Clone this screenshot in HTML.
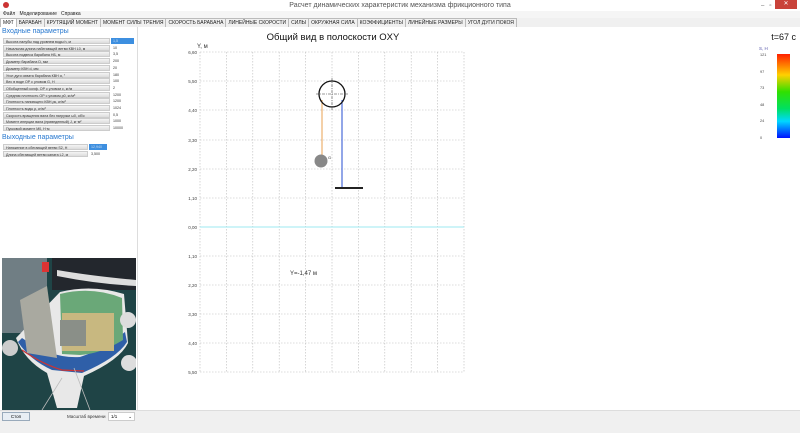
<!DOCTYPE html><html><head><meta charset="utf-8"><style>
*{margin:0;padding:0;box-sizing:border-box}
body{width:800px;height:433px;background:#f0f0f0;font-family:"Liberation Sans",sans-serif;position:relative;overflow:hidden}
.a{position:absolute;white-space:nowrap}
.title{top:0;left:0;width:800px;height:11px;background:#fff;font-size:7px;color:#555;text-align:center;line-height:11px}
.menu{top:11px;left:0;width:800px;height:7px;background:#f5f5f5;font-size:5px;line-height:7px;padding-left:3px;color:#222}
.tabs{top:18px;left:0;height:10px;font-size:5px}
.tabs span{display:inline-block;height:9px;line-height:9px;padding:0 2px;border:1px solid #bbb;border-bottom:none;background:#f0f0f0;margin-right:-1px;color:#222}
.tabs span.s{background:#fff;height:10px}
.main{top:27px;left:137px;width:663px;height:383px;background:#fff;border-left:1px solid #ddd}
.lp{top:27px;left:0;width:137px;height:383px;background:#fff}
.h{font-size:7px;color:#2a7ad0}
.row{position:absolute;left:3px;width:131px;height:6px;font-size:3.6px;line-height:6px}
.row .l{position:absolute;left:0;width:107px;height:6px;background:linear-gradient(#f4f4f4,#dcdcdc);border:1px solid #ccc;padding-left:2px;color:#333}
.row .v{position:absolute;left:110px;color:#333}
</style></head><body>
<div class="a title">Расчет динамических характеристик механизма фрикционного типа</div>
<div class="a" style="top:2px;left:3px;width:6px;height:6px;border-radius:3px;background:#c33"></div>
<div class="a" style="top:3px;left:761px;font-size:6px;color:#666">–&nbsp;&nbsp;&nbsp;▫</div>
<div class="a" style="top:0;left:775px;width:22px;height:9px;background:#c9423a;color:#fff;font-size:6px;text-align:center;line-height:9px">✕</div>
<div class="a menu">Файл&nbsp;&nbsp;&nbsp;Моделирование&nbsp;&nbsp;&nbsp;Справка</div>
<div class="a tabs"><span class="s">МФТ</span><span>БАРАБАН</span><span>КРУТЯЩИЙ МОМЕНТ</span><span>МОМЕНТ СИЛЫ ТРЕНИЯ</span><span>СКОРОСТЬ БАРАБАНА</span><span>ЛИНЕЙНЫЕ СКОРОСТИ</span><span>СИЛЫ</span><span>ОКРУЖНАЯ СИЛА</span><span>КОЭФФИЦИЕНТЫ</span><span>ЛИНЕЙНЫЕ РАЗМЕРЫ</span><span>УГОЛ ДУГИ ПОКОЯ</span></div>
<div class="a lp">
<div class="a h" style="top:1px;left:2px">Входные параметры</div>
<div class="row" style="top:11px"><div class="l">Высота палубы над уровнем воды h, м</div><div class="v" style="left:108px;width:23px;background:#3d8fe0;color:#cde;padding-left:2px">1,5</div></div>
<div class="row" style="top:17.7px"><div class="l">Начальная длина набегающей ветви КВН L0, м</div><div class="v">10</div></div>
<div class="row" style="top:24.4px"><div class="l">Высота подвеса барабана НБ, м</div><div class="v">3,5</div></div>
<div class="row" style="top:31.1px"><div class="l">Диаметр барабана D, мм</div><div class="v">200</div></div>
<div class="row" style="top:37.8px"><div class="l">Диаметр КВН d, мм</div><div class="v">20</div></div>
<div class="row" style="top:44.5px"><div class="l">Угол дуги охвата барабана КВН α, °</div><div class="v">180</div></div>
<div class="row" style="top:51.2px"><div class="l">Вес в воде ОР с уловом G, Н</div><div class="v">100</div></div>
<div class="row" style="top:57.9px"><div class="l">Обобщенный коэф. ОР с уловом c, кг/м</div><div class="v">2</div></div>
<div class="row" style="top:64.6px"><div class="l">Средняя плотность ОР с уловом ρ0, кг/м³</div><div class="v">1200</div></div>
<div class="row" style="top:71.3px"><div class="l">Плотность наноющего КВН ρк, кг/м³</div><div class="v">1200</div></div>
<div class="row" style="top:78px"><div class="l">Плотность воды ρ, кг/м³</div><div class="v">1024</div></div>
<div class="row" style="top:84.7px"><div class="l">Скорость вращения вала без нагрузки ω0, об/с</div><div class="v">0,5</div></div>
<div class="row" style="top:91.4px"><div class="l">Момент инерции вала (приведенный) J, кг·м²</div><div class="v">1000</div></div>
<div class="row" style="top:98.1px"><div class="l">Пусковой момент М0, Н·м</div><div class="v">10000</div></div>
<div class="a h" style="top:107px;left:2px">Выходные параметры</div>
<div class="row" style="top:117px"><div class="l" style="width:85px">Натяжение в сбегающей ветви S2, Н</div><div class="v" style="left:86px;width:18px;background:#3d8fe0;color:#cde;padding-left:2px">12,940</div></div>
<div class="row" style="top:124px"><div class="l" style="width:85px">Длина сбегающей ветви каната L2, м</div><div class="v" style="left:88px">3,500</div></div>
<svg class="a" style="top:231px;left:2px" width="134" height="152" viewBox="0 0 134 152">
<rect width="134" height="152" fill="#1f4446"/>
<rect x="50" y="0" width="84" height="32" fill="#23272d"/>
<path d="M55 12 Q90 18 134 22 L134 28 Q95 26 55 18 Z" fill="#ddd"/>
<rect x="0" y="0" width="45" height="75" fill="#707e84"/>
<path d="M14 80 Q22 102 45 115 L55 150 L75 150 L82 118 Q118 102 126 85 L122 36 Q90 26 58 34 Z" fill="#e8e8e8"/>
<path d="M16 84 Q28 102 50 112 L80 115 Q115 100 125 84 L123 74 Q100 92 78 99 Q50 101 20 80 Z" fill="#2f5fa8"/>
<path d="M20 92 Q40 106 60 112 L82 113" stroke="#c33" stroke-width="1.2" fill="none"/>
<path d="M58 36 Q90 28 120 40 L121 82 Q98 96 78 97 L60 96 Z" fill="#6aa878"/>
<rect x="60" y="55" width="52" height="38" fill="#c8b880"/>
<rect x="58" y="62" width="26" height="26" fill="#8a8f88"/>
<path d="M18 42 L45 28 L55 100 L25 95 Z" fill="#a9a9a0"/>
<circle cx="126" cy="62" r="8" fill="#ddd"/><circle cx="127" cy="105" r="8" fill="#ddd"/><circle cx="8" cy="90" r="8" fill="#ccc"/>
<rect x="40" y="4" width="7" height="10" fill="#d33"/>
<line x1="60" y1="120" x2="40" y2="152" stroke="#bbb" stroke-width="0.8"/><line x1="72" y1="110" x2="88" y2="152" stroke="#bbb" stroke-width="0.8"/>
</svg>
</div>
<div class="a main">
<svg width="663" height="383" style="position:absolute;left:0;top:0" font-family="Liberation Sans">
<g transform="translate(-137,-27)">
<g stroke="#bbb" stroke-width="0.6" stroke-dasharray="1.5,1.5">
<line x1="199" y1="52" x2="199" y2="372"/><line x1="225.4" y1="52" x2="225.4" y2="372"/><line x1="251.8" y1="52" x2="251.8" y2="372"/><line x1="278.2" y1="52" x2="278.2" y2="372"/><line x1="304.6" y1="52" x2="304.6" y2="372"/><line x1="331" y1="52" x2="331" y2="372"/><line x1="357.4" y1="52" x2="357.4" y2="372"/><line x1="383.8" y1="52" x2="383.8" y2="372"/><line x1="410.2" y1="52" x2="410.2" y2="372"/><line x1="436.6" y1="52" x2="436.6" y2="372"/><line x1="463" y1="52" x2="463" y2="372"/>
<line x1="199" y1="52" x2="463" y2="52"/><line x1="199" y1="81" x2="463" y2="81"/><line x1="199" y1="110" x2="463" y2="110"/><line x1="199" y1="140" x2="463" y2="140"/><line x1="199" y1="169" x2="463" y2="169"/><line x1="199" y1="198" x2="463" y2="198"/><line x1="199" y1="256" x2="463" y2="256"/><line x1="199" y1="285" x2="463" y2="285"/><line x1="199" y1="314" x2="463" y2="314"/><line x1="199" y1="343" x2="463" y2="343"/><line x1="199" y1="372" x2="463" y2="372"/>
</g>
<line x1="199" y1="227" x2="463" y2="227" stroke="#9ee8f0" stroke-width="1"/>
<g font-size="4.5" fill="#444" text-anchor="end">
<text x="196" y="54">6,60</text><text x="196" y="83">5,50</text><text x="196" y="112">4,40</text><text x="196" y="142">3,30</text><text x="196" y="171">2,20</text><text x="196" y="200">1,10</text><text x="196" y="229">0,00</text><text x="196" y="258">1,10</text><text x="196" y="287">2,20</text><text x="196" y="316">3,30</text><text x="196" y="345">4,40</text><text x="196" y="374">5,50</text>
</g>
<text x="196" y="48" font-size="6" fill="#333">Y, м</text>
<text x="332" y="40" font-size="9.5" fill="#111" text-anchor="middle">Общий вид в полоскости OXY</text>
<text x="289" y="275" font-size="6" fill="#333">Y=-1,47 м</text>
<line x1="321" y1="100" x2="321" y2="155" stroke="#e8a050" stroke-width="1"/>
<line x1="341" y1="100" x2="341" y2="187" stroke="#4a6ad8" stroke-width="1.2"/>
<circle cx="331" cy="94" r="13" fill="none" stroke="#111" stroke-width="1.3"/>
<line x1="315" y1="94" x2="347" y2="94" stroke="#333" stroke-width="0.5" stroke-dasharray="3,1,1,1"/>
<line x1="331" y1="78" x2="331" y2="110" stroke="#333" stroke-width="0.5" stroke-dasharray="3,1,1,1"/>
<circle cx="320" cy="161" r="6.5" fill="#888"/>
<text x="327" y="159" font-size="4" fill="#333">G</text>
<rect x="334" y="187" width="28" height="2" fill="#222"/>
<text x="795" y="40" font-size="9" fill="#111" text-anchor="end">t=67 с</text>
<defs><linearGradient id="g" x1="0" y1="0" x2="0" y2="1"><stop offset="0" stop-color="#ff2000"/><stop offset="0.25" stop-color="#ffd000"/><stop offset="0.45" stop-color="#30e000"/><stop offset="0.65" stop-color="#00e060"/><stop offset="0.8" stop-color="#00d8ff"/><stop offset="1" stop-color="#0010ff"/></linearGradient></defs>
<rect x="776" y="54" width="13" height="84" fill="url(#g)"/>
<text x="758" y="50" font-size="4.5" fill="#55a">S, Н</text>
<g font-size="3.8" fill="#444"><text x="759" y="56">121</text><text x="759" y="73">97</text><text x="759" y="89">73</text><text x="759" y="106">48</text><text x="759" y="122">24</text><text x="759" y="139">0</text></g>
</g></svg>
</div>
<div class="a" style="top:410px;left:0;width:800px;height:23px;background:#f0f0f0;border-top:1px solid #ddd"></div>
<div class="a" style="top:412px;left:2px;width:28px;height:9px;border:1px solid #9ab;background:#e8eef4;font-size:4.5px;text-align:center;line-height:8px">Стоп</div>
<div class="a" style="top:414px;left:67px;font-size:4.5px;color:#333">Масштаб времени</div>
<div class="a" style="top:412px;left:108px;width:27px;height:9px;border:1px solid #ccc;background:#fff;font-size:4.5px;line-height:8px;padding-left:2px">1/1 <span style="float:right;padding-right:2px">⌄</span></div>
</body></html>
